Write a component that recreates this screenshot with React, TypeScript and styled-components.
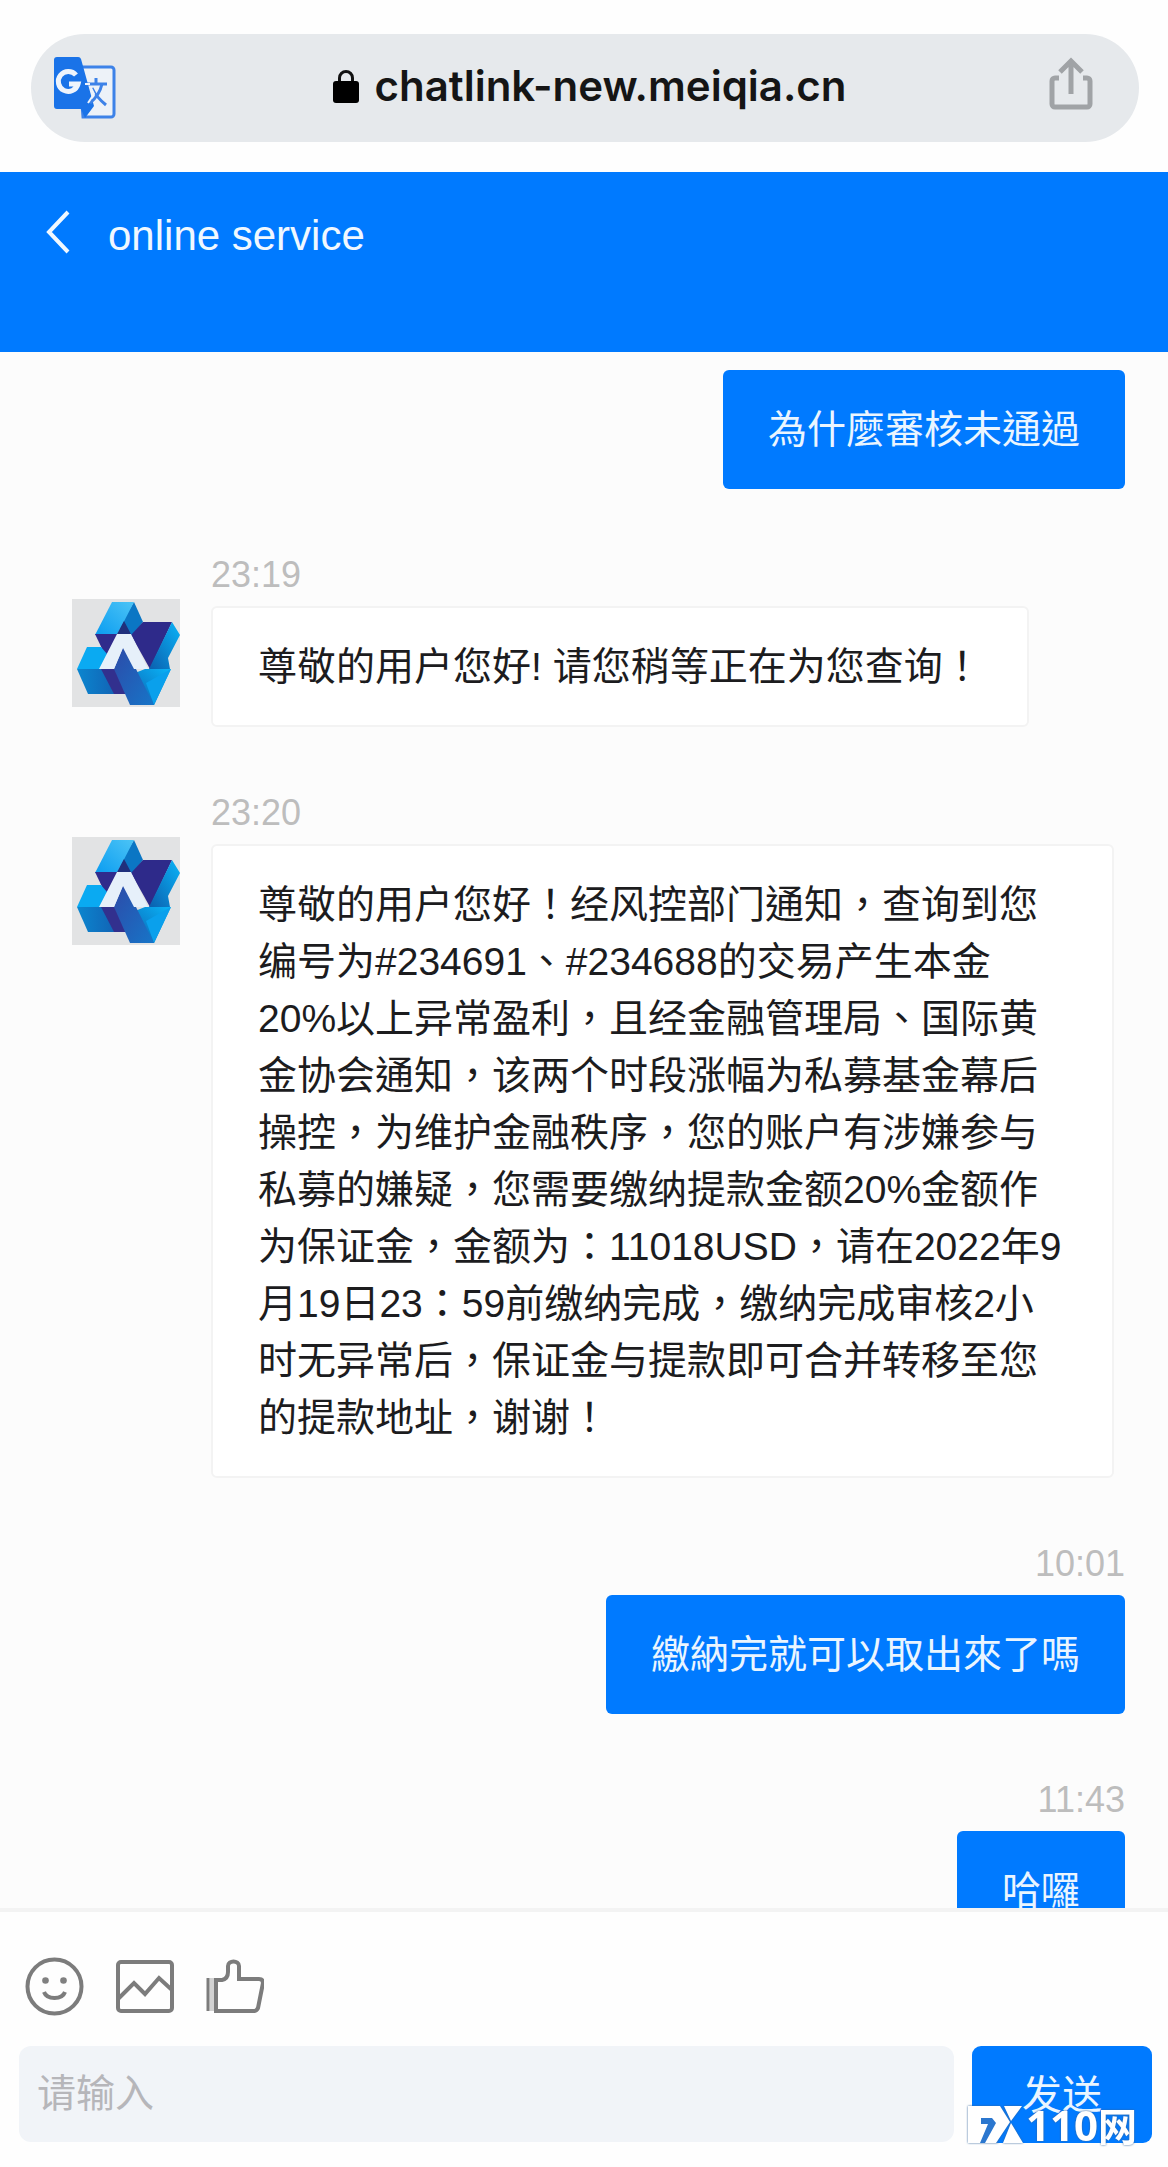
import React from 'react';
import styled, { createGlobalStyle, css } from 'styled-components';

const latin = '"Liberation Sans", "Noto Sans CJK TC", sans-serif';
const blue = '#007aff';

const GlobalStyle = createGlobalStyle`
  *, *::before, *::after { box-sizing: border-box; }
  html, body { margin: 0; height: 100%; }
  body { background: #fff; font-family: ${latin}; color: #1c1c1e; }
  button, input { font: inherit; }
`;

const Page = styled.div`
  display: flex;
  flex-direction: column;
  height: 100vh;
`;

const BrowserBar = styled.div`
  padding: 34px 29px 30px 31px;
  background: #fefefe;
`;

const AddressPill = styled.div`
  display: flex;
  align-items: center;
  height: 108px;
  padding: 0 46px 0 20px;
  border-radius: 54px;
  background: #e6e9ec;
`;

const IconButton = styled.button`
  display: flex;
  padding: 0;
  border: 0;
  background: none;
  cursor: pointer;
`;

const Address = styled.div`
  flex: 1;
  display: flex;
  align-items: center;
  justify-content: center;
  gap: 15px;
  padding: 0 0 4px 14px;
  font: 600 42px/52px Inter, ${latin};
  color: #151515;
`;

const Header = styled.header`
  display: flex;
  align-items: flex-start;
  gap: 38px;
  height: 180px;
  padding: 38px 46px;
  background: ${blue};
  color: #f0f8ff;
`;

const Title = styled.h1`
  margin: 0;
  font-size: 42px;
  font-weight: 400;
  line-height: 52px;
`;

const Messages = styled.main`
  flex: 1;
  min-height: 0;
  display: flex;
  flex-direction: column;
  gap: 66px;
  padding: 18px 43px 0 72px;
  overflow-y: auto;
  scrollbar-width: none;
  background: #fcfcfc;
`;

const Row = styled.article<{ $mine?: boolean }>`
  flex: none;
  display: flex;
  align-items: flex-start;
  gap: 31px;
  ${(p) =>
    p.$mine
      ? css`justify-content: flex-end;`
      : css`padding-right: 11px;`}
`;

const Avatar = styled.svg`
  flex: none;
  width: 108px;
  height: 108px;
  margin-top: 44px;
  background: #e2e3e4;
`;

const Stack = styled.div<{ $mine?: boolean }>`
  display: flex;
  flex-direction: column;
  align-items: ${(p) => (p.$mine ? 'flex-end' : 'flex-start')};
  gap: 11px;
`;

const Time = styled.time`
  font-size: 36px;
  line-height: 40px;
  color: #bdbdbd;
`;

const Bubble = styled.p<{ $mine?: boolean }>`
  margin: 0;
  border-radius: 6px;
  font-size: 39px;
  line-height: 57px;
  ${(p) =>
    p.$mine
      ? css`
          padding: 31px 45px;
          background: ${blue};
          color: #eaf5ff;
        `
      : css`
          padding: 30px 45px;
          border: 2px solid #f3f3f3;
          background: #fff;
        `}
`;

const Composer = styled.form`
  display: flex;
  flex-direction: column;
  gap: 30px;
  padding: 45px 16px 24px 19px;
  border-top: 4px solid #f3f3f3;
  background: #fefefe;
`;

const Tools = styled.div`
  display: flex;
  gap: 31px;
  padding: 0 6px;
`;

const Entry = styled.div`
  display: flex;
  gap: 18px;
`;

const TextBox = styled.input`
  flex: 1;
  min-width: 0;
  height: 96px;
  padding: 0 18px;
  border: 0;
  border-radius: 12px;
  outline: 0;
  background: #f1f4f8;
  font-size: 39px;
  font-family: "Liberation Sans", "Noto Sans CJK SC", sans-serif;
  &::placeholder { color: #b6b6ba; opacity: 1; }
`;

const SendWrap = styled.div`
  position: relative;
  display: flex;
`;

const Send = styled.button`
  width: 180px;
  height: 97px;
  padding: 0 0 6px;
  border: 0;
  border-radius: 9px;
  background: ${blue};
  color: #eaf5ff;
  font-size: 40px;
  font-family: "Liberation Sans", "Noto Sans CJK SC", sans-serif;
`;

const Watermark = styled.div`
  position: absolute;
  left: -4px;
  bottom: 0;
  display: flex;
  align-items: flex-end;
  height: 37px;
  color: #fff;
  filter: drop-shadow(0 0 1px #35659c);
  pointer-events: none;
`;

const MarkDigits = styled.span`
  font: 700 42px/37px "Open Sans", sans-serif;
`;

const MarkHan = styled.span`
  font: 700 39px/37px "Noto Sans CJK SC", sans-serif;
`;

const TranslateIcon = () => (
  <svg width="66" height="66" viewBox="0 0 66 66" aria-hidden="true">
    <path d="M28 12h32a3 3 0 0 1 3 3v44a3 3 0 0 1-3 3H32z" fill="#edf2f8" stroke="#3d82e8" strokeWidth="3" />
    <path d="M6 2h21a3 3 0 0 1 3 2l13 47-9 12-4-9H6a3 3 0 0 1-3-3V5a3 3 0 0 1 3-3z" fill="#1a73e8" />
    <path d="M25 20a10 10 0 1 0 2 9H18" fill="none" stroke="#eef4fc" strokeWidth="5" />
    <path d="M45 23v5M51 29c-2 9-6 14-12 19" fill="none" stroke="#3d82e8" strokeWidth="3" />
    <path d="M35 29h21M41 33c3 7 8 12 14 17" fill="none" stroke="#3d82e8" strokeWidth="3" />
    <path d="M34 29h5M40 33l3 6-6 9" fill="none" stroke="#eef4fc" strokeWidth="2" />
  </svg>
);

const LockIcon = () => (
  <svg width="26" height="34" viewBox="0 0 26 34" aria-hidden="true">
    <path d="M6.500 15V9a6.500 6.500 0 0 1 13 0v6" fill="none" stroke="#111" strokeWidth="3" />
    <rect y="12" width="26" height="22" rx="3" fill="#000" />
  </svg>
);

const ShareIcon = () => (
  <svg width="44" height="62" viewBox="0 0 44 62" fill="none" stroke="#a0a3a6" strokeWidth="5" aria-hidden="true">
    <path d="M10 21H6a3 3 0 0 0-3 3v23a3 3 0 0 0 3 3h32a3 3 0 0 0 3-3V24a3 3 0 0 0-3-3h-4M22 37V4M11 15 22 4l11 11" />
  </svg>
);

const BackIcon = () => (
  <svg width="24" height="46" viewBox="0 0 24 46" fill="none" stroke="#f0f8ff" strokeWidth="4" aria-hidden="true">
    <path d="M22 2 3 22l19 20" />
  </svg>
);

const AgentAvatar = () => (
  <Avatar viewBox="0 0 108 108" role="img" aria-label="online service">
    <defs>
      <linearGradient id="top" x1="0" y1="1" x2="1" y2="0">
        <stop offset="0" stopColor="#0a9cf0" />
        <stop offset="1" stopColor="#4cc4f6" />
      </linearGradient>
      <linearGradient id="left" x1="0" y1="0" x2="1" y2="0">
        <stop offset="0" stopColor="#0b86cf" />
        <stop offset="1" stopColor="#1458ac" />
      </linearGradient>
      <linearGradient id="right" x1="0" y1="1" x2="1" y2="0">
        <stop offset="0" stopColor="#0b5fae" />
        <stop offset="1" stopColor="#0ab4f8" />
      </linearGradient>
      <linearGradient id="leg" x1="0" y1="0" x2="1" y2="1">
        <stop offset="0" stopColor="#2d4aa8" />
        <stop offset="1" stopColor="#1775c8" />
      </linearGradient>
    </defs>
    <path d="M62 3l9 20-11 14H48V26z" fill="#0b76c4" />
    <path d="M40 3h22L45 36H23z" fill="url(#top)" />
    <path d="M52 22l8 15H44z" fill="#20307c" />
    <path d="M23 35h24L34 58z" fill="#302b8c" />
    <path d="M59 36l12-13h29L78 70z" fill="#2e2a8a" />
    <path d="M100 23l8 13-12 23 2 11H77z" fill="url(#right)" />
    <path d="M15 48h14l6 7-6 15H5z" fill="#0aaaf2" />
    <path d="M5 70h38l13 25H16z" fill="url(#left)" />
    <path d="M29 70h14l13 25H42z" fill="#32308e" />
    <path d="M73 70h26l-17 36H62l-4-30z" fill="url(#right)" />
    <path d="M52 46l14 28 16 32H58L42 70z" fill="url(#leg)" />
    <path d="M74 84 99 70 82 106z" fill="#0aa0ec" />
    <path d="M45 35h14l17 35H62L51 49 42 70H27z" fill="#e6f0fa" />
  </Avatar>
);

const toolStroke = { fill: 'none', stroke: '#7c7c7c', strokeWidth: 4 };

const SmileIcon = () => (
  <svg width="59" height="59" viewBox="0 0 59 59" {...toolStroke} aria-hidden="true">
    <circle cx="29.500" cy="29.500" r="27" />
    <path d="M19 35c3 8 18 8 21 0" />
    <g fill="#808080" stroke="none">
      <circle cx="20.500" cy="23.500" r="3.300" />
      <circle cx="38.500" cy="23.500" r="3.300" />
    </g>
  </svg>
);

const PictureIcon = () => (
  <svg width="59" height="59" viewBox="0 0 59 59" {...toolStroke} aria-hidden="true">
    <rect x="3" y="5" width="54" height="49" rx="3" />
    <path d="M3 42 19 26l11 11 14-16 13 12" />
  </svg>
);

const ThumbIcon = () => (
  <svg width="59" height="59" viewBox="0 0 59 59" {...toolStroke} aria-hidden="true">
    <path d="M7 21v33" strokeWidth="5" stroke="#d2d2d2" />
    <path d="M3 21v33" strokeWidth="3" />
    <path d="M11 54V23h6c5-1 6-4 6-8V9c0-6 11-6 11 0v13h20c3 0 4 2 4 4l-5 25c-1 2-2 3-4 3z" />
  </svg>
);

const FxMark = () => (
  <svg width="58" height="37" viewBox="0 0 58 37" aria-hidden="true">
    <path d="M12 11h18v26H10z" fill="#2b77cf" />
    <path
      d="M0 0h32l10 16-14 21H0zM13 12v6h7l-8 19h5l11-20-4-5zM36 0h18L43 15zM43 17l12 20H35z"
      fill="#fff"
      fillRule="evenodd"
    />
  </svg>
);

type Message = { mine?: boolean; time?: string; text: string };

const messages: Message[] = [
  { mine: true, text: '為什麼審核未通過' },
  { time: '23:19', text: '尊敬的用户您好! 请您稍等正在为您查询！' },
  {
    time: '23:20',
    text:
      '尊敬的用户您好！经风控部门通知，查询到您编号为#234691、#234688的交易产生本金20%以上异常盈利，且经金融管理局、国际黄金协会通知，该两个时段涨幅为私募基金幕后操控，为维护金融秩序，您的账户有涉嫌参与私募的嫌疑，您需要缴纳提款金额20%金额作为保证金，金额为：11018USD，请在2022年9月19日23：59前缴纳完成，缴纳完成审核2小时无异常后，保证金与提款即可合并转移至您的提款地址，谢谢！',
  },
  { mine: true, time: '10:01', text: '繳納完就可以取出來了嗎' },
  { mine: true, time: '11:43', text: '哈囉' },
];

export default function App() {
  return (
    <Page>
      <GlobalStyle />
      <BrowserBar>
        <AddressPill>
          <IconButton type="button" aria-label="Translate"><TranslateIcon /></IconButton>
          <Address><LockIcon />chatlink-new.meiqia.cn</Address>
          <IconButton type="button" aria-label="Share"><ShareIcon /></IconButton>
        </AddressPill>
      </BrowserBar>
      <Header>
        <IconButton type="button" aria-label="Back"><BackIcon /></IconButton>
        <Title>online service</Title>
      </Header>
      <Messages>
        {messages.map((m) => (
          <Row key={m.text} $mine={m.mine}>
            {!m.mine && <AgentAvatar />}
            <Stack $mine={m.mine}>
              {m.time && <Time>{m.time}</Time>}
              <Bubble $mine={m.mine}>{m.text}</Bubble>
            </Stack>
          </Row>
        ))}
      </Messages>
      <Composer onSubmit={(e) => e.preventDefault()}>
        <Tools>
          <IconButton type="button" aria-label="Emoji"><SmileIcon /></IconButton>
          <IconButton type="button" aria-label="Picture"><PictureIcon /></IconButton>
          <IconButton type="button" aria-label="Rate"><ThumbIcon /></IconButton>
        </Tools>
        <Entry>
          <TextBox aria-label="请输入" placeholder="请输入" />
          <SendWrap>
            <Send type="submit">发送</Send>
            <Watermark>
              <FxMark />
              <MarkDigits>110</MarkDigits>
              <MarkHan>网</MarkHan>
            </Watermark>
          </SendWrap>
        </Entry>
      </Composer>
    </Page>
  );
}
